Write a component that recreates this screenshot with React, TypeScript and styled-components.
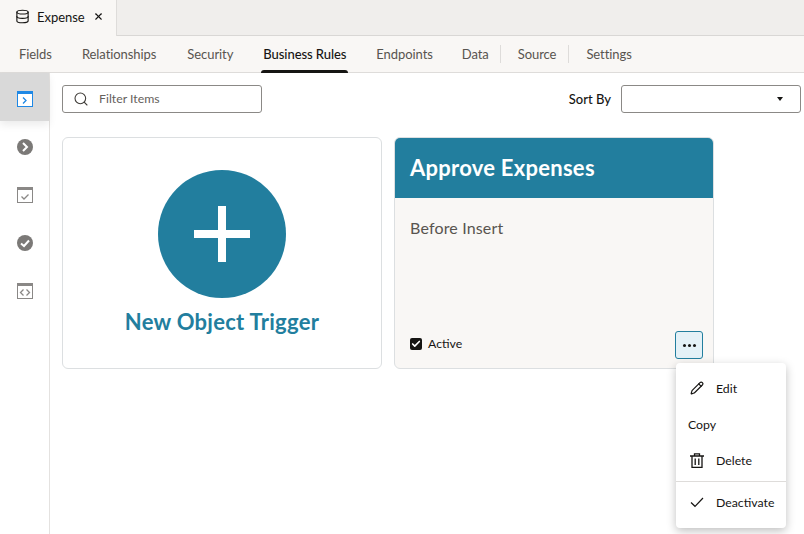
import React from 'react';
import styled, { createGlobalStyle } from 'styled-components';
import { LuDatabase, LuSearch, LuX, LuPencil, LuCheck } from 'react-icons/lu';

const GlobalStyle = createGlobalStyle`
  html, body {
    margin: 0;
    padding: 0;
    height: 100%;
    background: #fff;
    font-family: 'Lato', 'Noto Sans', sans-serif;
    color: #161513;
  }
  * { box-sizing: border-box; }
`;

const Page = styled.div`
  width: 804px;
  height: 534px;
  display: flex;
  flex-direction: column;
  overflow: hidden;
`;

const TabStrip = styled.div`
  height: 36px;
  display: flex;
  background: #f0eeec;
  border-bottom: 1px solid #d9d7d5;
`;

const FileTab = styled.div`
  width: 117px;
  height: 36px;
  display: flex;
  align-items: center;
  padding: 0 0 3px 15px;
  background: #f9f7f5;
  border-right: 1px solid #dedcda;
  font-size: 13px;
  letter-spacing: -0.03px;
  svg { flex: none; }
`;

const FileTabName = styled.span`
  margin-left: 7px;
  margin-right: 8px;
`;

const Nav = styled.div`
  height: 37px;
  display: flex;
  align-items: stretch;
  padding-left: 19px;
  background: #f9f7f5;
  border-bottom: 1px solid #dedcda;
`;

const NavItem = styled.div<{ $active?: boolean; $gap?: number }>`
  position: relative;
  display: flex;
  align-items: center;
  padding-bottom: 1px;
  margin-right: ${p => p.$gap ?? 30}px;
  font-size: 13px;
  letter-spacing: -0.07px;
  color: ${p => (p.$active ? '#161513' : '#58544f')};
  font-weight: ${p => (p.$active ? 500 : 400)};
  ${p =>
    p.$active &&
    `&::after {
      content: '';
      position: absolute;
      left: -2px;
      right: -2px;
      bottom: -1px;
      height: 3px;
      background: #161513;
      border-radius: 3px 3px 0 0;
    }`}
`;

const NavDivider = styled.div`
  width: 1px;
  height: 18px;
  align-self: center;
  margin: 0 17px 0 0;
  background: #dedcda;
`;

const Body = styled.div`
  flex: 1;
  display: flex;
  min-height: 0;
`;

const SideBar = styled.div`
  width: 50px;
  flex: none;
  border-right: 1px solid #e4e2e0;
`;

const SideItem = styled.div<{ $active?: boolean }>`
  height: 48px;
  display: flex;
  align-items: center;
  justify-content: center;
  padding-top: 4px;
  background: ${p => (p.$active ? '#d9d9d9' : 'transparent')};
  box-shadow: ${p => (p.$active ? '0 4px 8px rgba(0,0,0,0.08)' : 'none')};
`;

const Content = styled.div`
  position: relative;
  flex: 1;
  padding: 12px 3px 0 12px;
`;

const Toolbar = styled.div`
  height: 28px;
  display: flex;
  align-items: center;
`;

const FilterBox = styled.div`
  width: 200px;
  height: 28px;
  display: flex;
  align-items: center;
  padding: 0 0 1px 10px;
  border: 1px solid #8b8986;
  border-radius: 3px;
  font-size: 12.3px;
  color: #65615c;
  svg { margin-right: 10px; color: #3f3c38; }
`;

const SortLabel = styled.span`
  margin-left: auto;
  margin-right: 10px;
  font-size: 13px;
  font-weight: 500;
`;

const SortSelect = styled.div`
  width: 180px;
  height: 28px;
  display: flex;
  align-items: center;
  justify-content: flex-end;
  padding-right: 17px;
  border: 1px solid #8b8986;
  border-radius: 3px;
`;

const Caret = styled.div`
  width: 0;
  height: 0;
  border-left: 3.5px solid transparent;
  border-right: 3.5px solid transparent;
  border-top: 4px solid #161513;
`;

const Cards = styled.div`
  display: flex;
  gap: 12px;
  margin-top: 24px;
`;

const Card = styled.div<{ $tinted?: boolean }>`
  width: 320px;
  height: 232px;
  display: flex;
  flex-direction: column;
  border: 1px solid #dcdfe1;
  border-radius: 6px;
  overflow: hidden;
  background: ${p => (p.$tinted ? '#f9f7f5' : '#fff')};
`;

const NewCardBody = styled.div`
  display: flex;
  flex-direction: column;
  align-items: center;
  padding-top: 32px;
`;

const PlusCircle = styled.div`
  position: relative;
  width: 128px;
  height: 128px;
  border-radius: 50%;
  background: #227e9e;
  &::before, &::after {
    content: '';
    position: absolute;
    background: #fff;
  }
  &::before { left: 36px; top: 60px; width: 56px; height: 8px; }
  &::after { left: 60px; top: 36px; width: 8px; height: 56px; }
`;

const NewLabel = styled.div`
  margin-top: 10px;
  font-size: 22px;
  line-height: 28px;
  font-weight: 700;
  letter-spacing: 0.28px;
  color: #227e9e;
`;

const CardHeader = styled.div`
  height: 60px;
  flex: none;
  display: flex;
  align-items: center;
  padding: 0 0 2px 15px;
  background: #227e9e;
  color: #fff;
  font-size: 22px;
  font-weight: 700;
  letter-spacing: 0.26px;
`;

const CardBody = styled.div`
  flex: 1;
  display: flex;
  flex-direction: column;
  padding: 19px 10px 9px 15px;
`;

const Subtitle = styled.div`
  font-size: 16px;
  line-height: 22px;
  letter-spacing: 0.16px;
  color: #58544f;
`;

const CardFooter = styled.div`
  margin-top: auto;
  display: flex;
  align-items: center;
  justify-content: space-between;
`;

const ActiveCheck = styled.label`
  display: flex;
  align-items: center;
  gap: 6px;
  margin-bottom: 3px;
  font-size: 12.3px;
`;

const CheckBox = styled.span`
  width: 12px;
  height: 12px;
  display: flex;
  align-items: center;
  justify-content: center;
  background: #161513;
  border-radius: 2px;
  color: #fff;
`;

const MoreButton = styled.div`
  width: 28px;
  height: 28px;
  display: flex;
  align-items: center;
  justify-content: center;
  gap: 2px;
  background: #e4f1f7;
  border: 1px solid #227e9e;
  border-radius: 3px;
`;

const Dot = styled.span`
  width: 3px;
  height: 3px;
  border-radius: 50%;
  background: #161513;
`;

const Menu = styled.div`
  position: absolute;
  left: 626px;
  top: 290px;
  width: 110px;
  height: 165px;
  padding-top: 7px;
  background: #fff;
  border-radius: 4px;
  box-shadow: 0 3px 10px rgba(0, 0, 0, 0.25);
`;

const MenuItem = styled.div`
  height: 36px;
  display: flex;
  align-items: center;
  padding-left: 12px;
  font-size: 12.3px;
  svg { flex: none; margin-right: 12px; margin-left: 2px; }
`;

const MenuDivider = styled.div`
  height: 1px;
  margin-top: 3px;
  margin-bottom: 2px;
  background: #dedcda;
`;

const WindowIcon = ({ color, line, children }: { color: string; line?: string; children: React.ReactNode }) => (
  <svg width="16" height="16" viewBox="0 0 16 16">
    <rect x="0.5" y="0.5" width="15" height="15" fill="#fff" stroke={color} />
    <rect x="0" y="0" width="16" height="3" fill={color} />
    <g fill="none" stroke={line ?? color} strokeWidth="1.3">{children}</g>
  </svg>
);

const RoundIcon = ({ d }: { d: string }) => (
  <svg width="16" height="16" viewBox="0 0 16 16">
    <circle cx="8" cy="8" r="8" fill="#7b7977" />
    <path d={d} fill="none" stroke="#fff" strokeWidth="2" />
  </svg>
);

const TrashIcon = () => (
  <svg width="14" height="15" viewBox="0 0 14 15" fill="none" stroke="#161513" strokeWidth="1.3">
    <path d="M0 3h14M4.5 3V.8h5V3M2 3v11.4h10V3M5.2 5.5v6.5M8.8 5.5v6.5" />
  </svg>
);

const ThinCheck = () => (
  <svg width="14" height="14" viewBox="0 0 14 14" fill="none" stroke="#161513" strokeWidth="1.2">
    <path d="M1 7.5l4 3.8 8-8.3" />
  </svg>
);

export default function App() {
  return (
    <Page>
      <GlobalStyle />
      <TabStrip>
        <FileTab>
          <LuDatabase size={15} strokeWidth={1.8} />
          <FileTabName>Expense</FileTabName>
          <LuX size={11} strokeWidth={2.4} />
        </FileTab>
      </TabStrip>
      <Nav>
        <NavItem>Fields</NavItem>
        <NavItem $gap={31}>Relationships</NavItem>
        <NavItem>Security</NavItem>
        <NavItem $active>Business Rules</NavItem>
        <NavItem $gap={29}>Endpoints</NavItem>
        <NavItem $gap={11}>Data</NavItem>
        <NavDivider />
        <NavItem $gap={12}>Source</NavItem>
        <NavDivider />
        <NavItem>Settings</NavItem>
      </Nav>
      <Body>
        <SideBar>
          <SideItem $active>
            <WindowIcon color="#1e88e5">
              <path d="M6 6.5l3 3-3 3" />
            </WindowIcon>
          </SideItem>
          <SideItem>
            <RoundIcon d="M6 4l4 4-4 4" />
          </SideItem>
          <SideItem>
            <WindowIcon color="#8a8886">
              <path d="M4.5 9.5l2.5 2.5 4.5-4.5" />
            </WindowIcon>
          </SideItem>
          <SideItem>
            <RoundIcon d="M4 8.5l3 2.5 5-5.5" />
          </SideItem>
          <SideItem>
            <WindowIcon color="#8a8886">
              <path d="M6.5 6.5l-3 3 3 3M9.5 6.5l3 3-3 3" />
            </WindowIcon>
          </SideItem>
        </SideBar>
        <Content>
          <Toolbar>
            <FilterBox>
              <LuSearch size={16} strokeWidth={1.6} />
              Filter Items
            </FilterBox>
            <SortLabel>Sort By</SortLabel>
            <SortSelect>
              <Caret />
            </SortSelect>
          </Toolbar>
          <Cards>
            <Card>
              <NewCardBody>
                <PlusCircle />
                <NewLabel>New Object Trigger</NewLabel>
              </NewCardBody>
            </Card>
            <Card $tinted>
              <CardHeader>Approve Expenses</CardHeader>
              <CardBody>
                <Subtitle>Before Insert</Subtitle>
                <CardFooter>
                  <ActiveCheck>
                    <CheckBox>
                      <LuCheck size={10} strokeWidth={4} />
                    </CheckBox>
                    Active
                  </ActiveCheck>
                  <MoreButton>
                    <Dot />
                    <Dot />
                    <Dot />
                  </MoreButton>
                </CardFooter>
              </CardBody>
            </Card>
          </Cards>
          <Menu>
            <MenuItem>
              <LuPencil size={14} strokeWidth={2} />
              Edit
            </MenuItem>
            <MenuItem>Copy</MenuItem>
            <MenuItem>
              <TrashIcon />
              Delete
            </MenuItem>
            <MenuDivider />
            <MenuItem>
              <ThinCheck />
              Deactivate
            </MenuItem>
          </Menu>
        </Content>
      </Body>
    </Page>
  );
}
